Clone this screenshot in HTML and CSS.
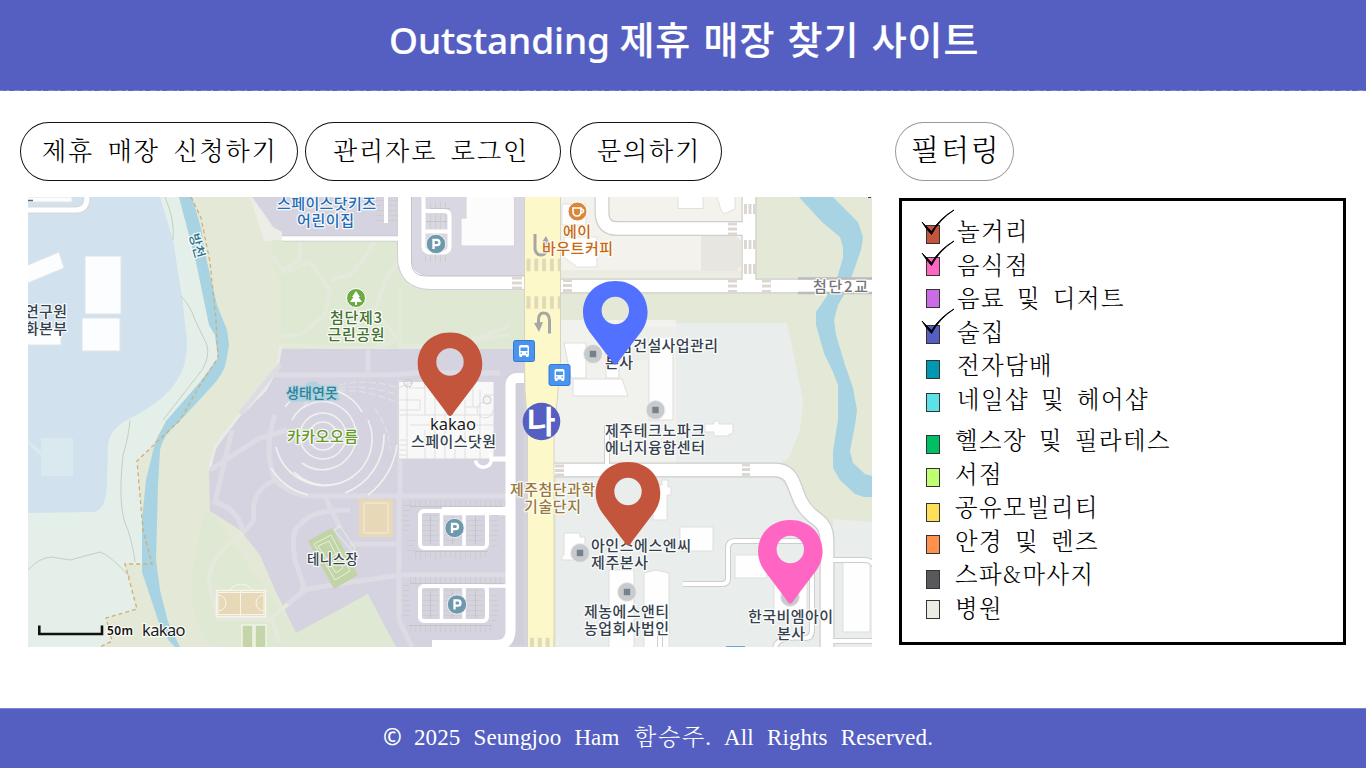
FILE: index.html
```html
<!DOCTYPE html>
<html lang="ko">
<head>
<meta charset="utf-8">
<title>Outstanding 제휴 매장 찾기 사이트</title>
<link rel="stylesheet" href="styles.css">
</head>
<body>
<header class="header"><h1 class="title"><span class="title-en">Outstanding</span> <span class="title-ko">제휴 매장 찾기 사이트</span></h1></header>
<main class="main">
  <section class="left">
    <nav class="nav">
      <button class="pill pill-apply">제휴 매장 신청하기</button>
      <button class="pill pill-login">관리자로 로그인</button>
      <button class="pill pill-ask">문의하기</button>
    </nav>
    <svg class="map" viewBox="28 197 844 450" width="844" height="450">
      <defs>
        <pattern id="hv" width="5" height="8" patternUnits="userSpaceOnUse"><path d="M.5 0V8" stroke="#cfccc9"/></pattern>
        <pattern id="hh" width="8" height="5" patternUnits="userSpaceOnUse"><path d="M0 .5H8" stroke="#cfccc9"/></pattern>
        <path id="pin" fill-rule="evenodd" d="M0 0Q-2 0-4-4L-26-33Q-32.300-42-32.300-52C-32.300-70-19-83.500 0-83.500S32.300-70 32.300-52Q32.300-42 26-33L4-4Q2 0 0 0ZM0-67.700A13.700 13.700 0 1 0 0-40.300A13.700 13.700 0 1 0 0-67.700Z"/>
        <g id="poi"><circle r="9.500" fill="#c8cacd" stroke="#eee"/><rect x="-3.200" y="-3.200" width="6.400" height="6.400" fill="#74838a"/></g>
        <g id="park"><circle r="9.700" fill="#6e98ab" stroke="#edf0f3"/><path d="M-2.500 5V-4.200H.8A2.600 2.600 0 0 1 .8 1.200H-2.500" fill="none" stroke="#fff" stroke-width="2.300"/></g>
        <g id="bus"><rect x=".5" y=".5" width="21" height="21" rx="2" fill="#4a94f0" stroke="#3179d2"/><path fill="#fff" fill-rule="evenodd" d="M6 7Q6 5 8 5H14Q16 5 16 7V15.500H15.500V17H13V15.500H9V17H6.500V15.500H6ZM7.500 7.500V11H14.500V7.500ZM7.500 12.500V13.800H9V12.500ZM13 12.500V13.800H14.500V12.500Z"/></g>
      </defs>
      <rect x="28" y="197" width="844" height="450" fill="#e4e8d7"/>
      <!-- west bank -->
      <path fill="#e5efea" d="M28 197H179L196 262 209 325 215 335 218 358 200 385 180 420 137 461 143 530 152 564H125L137 609 106 618 112 641 100 647H28Z"/>
      <path fill="#d1e2ee" d="M28 197H160L173 240 182 297 187 340Q188 365 176 382 163 402 127 420 109 430 108 445L107 485Q106 512 92 512L28 513Z"/>
      <path fill="#a7d3e2" d="M179 197L196 262 209 325 215 335 218 358 200 382 167 420 155 443 146 480 142 520V572L158 620Q163 636 175 647H180L168 622 160 590 156 560 158 485 160 450Q163 435 178 423L213 385Q224 373 226 362L229 345 227 330 217 305 207 262 201 228 192 197Z"/>
      <path fill="none" stroke="#c3d0bd" d="M165 197Q175 220 173 240M181 296Q190 305 195 320L207 345Q210 357 202 370L163 420M130 420Q129 435 123 455 117 510 128 530 134 550 135 562M28 570Q40 557 52 557L70 560 100 552Q110 555 130 577M167 420L155 443"/>
      <path fill="none" stroke="#d4ae72" stroke-width="1.300" stroke-dasharray="4 3" d="M191 197L201 218 210 262 216 320 218 358 200 385 180 420 137 461 143 530 152 564H125L137 609 106 618 112 641 100 647"/>
      <g fill="#fbfdfe" stroke="#e0e3e6"><path d="M85 256H121V314H85ZM82 318H120V351H82ZM28 265L59 252 64 268 28 283M28 330H61V345H28M28 197H72V202H28"/></g>
      <path fill="#dae9f0" d="M41 438H73V476H41ZM28 440L42 452 41 456 28 444Z"/>
      <path d="M28 210H76Q87 210 87 197" fill="none" stroke="#d8dadd" stroke-width="8"/><path d="M28 210H76Q87 210 87 197" fill="none" stroke="#fff" stroke-width="5"/>
      <path d="M28 200.500H33" stroke="#5a6870" stroke-width="1.500"/>
      <!-- park -->
      <path fill="#ecede6" d="M250 197H260L282 232V241H264Z"/>
      <path fill="#d5d3df" d="M252 197L265 215 273 227 282 232V240H398V197Z"/>
      <path fill="#dee8d2" d="M272 240H398V262Q400 290 424 290H524V350H281V280L272 262Z"/>
      <path fill="none" stroke="#e4eadb" stroke-width="4" d="M300 240V260L282 270M271 255L285 272 310 262 330 290 325 315 300 335 281 336M375 240Q365 260 350 275L330 280M398 262L385 280 375 310 398 340 368 350M400 290V350M281 345L400 350 510 335M398 345Q460 350 510 325"/>
      <path fill="#dee8d2" d="M210 511Q200 520 198 545 184 590 200 630L210 647H396L368 594 296 633Z"/>
      <path fill="#d5d3df" d="M281 349L278 365 270 383 250 408 235 420 215 450 209 470 210 511 240 530 260 555 275 590 296 633 368 594 396 647H527V349Z"/>
      <path fill="none" stroke="#e9ebe7" stroke-width="3" d="M281 345L277 368 265 390 240 414 215 447 209 470"/>
      <path fill="none" stroke="#dddce4" stroke-width="5" d="M210 470L260 438 287 430M232 430L215 502Q240 510 243 533M275 480Q250 490 254 520L243 533M368 350V375M400 380V497M240 414L280 365M275 415Q263 450 275 480 290 495 310 496H507M325 496L340 528M300 525Q310 510 350 510M300 525Q290 530 295 560L305 590 288 604M300 590L400 575H506M399 497V620L412 647M350 544H400M272 375H395L413 373H500"/>
      <path fill="none" stroke="#e4e9dc" stroke-width="4.500" d="M243 533Q203 560 210 590L218 619H270L288 604M272 620L280 642"/>
      <path fill="none" stroke="#dfdee2" stroke-width="1.500" stroke-dasharray="7 3" d="M298 412Q335 370 396 387M303 405Q335 376 396 394M310 398Q345 381 396 402M375 409Q390 430 390 450"/>
      <g fill="none" stroke="#f2f1ef" stroke-width="1.600"><circle cx="323" cy="436" r="14"/><circle cx="323" cy="436" r="23"/><path d="M292 420A34 34 0 1 1 302 463M285 407A46 46 0 0 1 362 412M368 420A46 46 0 0 1 294 472M276 447A50 50 0 0 0 340 483M271 468A61 61 0 0 0 308 495M384 434A61 61 0 0 1 345 493M397 445A74 74 0 0 1 368 495"/></g>
      <path fill="#9dd0df" d="M304 387Q308 379 317 382 325 392 336 389L340 400 290 402 286 394Z" opacity=".6"/>
      <path fill="#e7d9b8" d="M359 499H393V537H359Z"/><path fill="none" stroke="#f3eddd" d="M364 503H388V533H364Z"/>
      <path fill="#c0d4a5" d="M308 541L332 528 358 575 334 589Z"/><path fill="none" stroke="#e9f0dd" d="M314 544L331 535 350 571 335 580ZM318 546L329 541 343 568 336 573ZM321 562L340 552M334 530L340 526 355 548 353 552Z"/>
      <path fill="#e7d9b8" stroke="#f8f5ee" stroke-width="1.500" d="M216.500 590.500H265.500V616.500H216.500Z"/><path fill="none" stroke="#f8f5ee" d="M218 595A8 8 0 0 1 218 611M264 595A8 8 0 0 0 264 611M240.500 590V616M229 590Q241 578 253 590M218 592.500H264V614.500H218Z"/>
      <path fill="#c3d5a9" stroke="#f0f2e6" stroke-width="1.500" d="M242 625H253V649H242ZM255 625H266V649H255Z"/>
      <!-- north-west roads -->
      <path fill="#d9d8e2" d="M411 197H524V276H425Q411 276 411 262Z"/>
      <path fill="none" stroke="#d0cfd5" stroke-width="15" d="M404.500 197V256Q404.500 282.500 431 282.500H526"/>
      <path fill="none" stroke="#c8c7ce" stroke-width="6" d="M282 238.500H400"/>
      <path fill="none" stroke="#fff" stroke-width="13" d="M404.500 197V256Q404.500 282.500 431 282.500H526"/>
      <path fill="none" stroke="#fff" stroke-width="4.500" d="M282 238.500H404"/>
      <path fill="#fff" d="M384 197H388V223H384Z"/><path fill="url(#hh)" d="M376 198H384V222H376ZM388 198H397V222H388Z"/>
      <path fill="#fcfcfd" stroke="#d4d3d9" d="M466 197V218H461V246H514.500V197"/>
      <path fill="none" stroke="#fff" stroke-width="4" d="M423.500 197V246Q423.500 252.500 431 252.500H443Q449.500 252.500 449.500 246V216Q449.500 211 444 211H424M424 231.500H449"/>
      <path fill="url(#hv)" d="M430 202H450V209H430ZM425 255H450V262H425ZM426 214H447V221H426ZM426 222H447V229H426Z"/>
      <path fill="none" stroke="#c6c4cb" d="M426 221.500H447M430 208.500H450M411.500 197V262Q411.500 276 425 276H524"/>
      <!-- Kakao campus and car parks -->
      <path fill="#c9c8d0" d="M506 380Q506 373 514 373H524V645H506Z" opacity=".35"/>
      <path fill="#f8f8f8" stroke="#d7d7d9" d="M398.500 381.500H494V459H398.500Z"/>
      <path fill="none" stroke="#dfdfe1" d="M407 382V459M398 388L414 382M409 388H425V381M425 381V415M435 381V459M445 410V459M398 415H494M410 425H494M465 400V459M480 390V459M465 407H480M473 381V407M484 395H494M425 430V459M398 440H407M398 445H407M398 450H407M398 455H407M455 440V459M484 402A8 8 0 1 0 493 410M398 400H420V410H398"/><circle cx="487" cy="400" r="4" fill="#f4f4f4" stroke="#ccc"/><circle cx="408" cy="383" r="4" fill="none" stroke="#ccc"/>
      <g fill="none" stroke="#fff" stroke-linejoin="round"><path stroke-width="10" d="M524 378H517Q510.500 378 510.500 386V630Q510.500 645 496 645H432"/><path stroke-width="3.500" d="M475.500 460.500A8 8 0 1 0 489 453.500"/><path stroke-width="5" d="M492 459H510"/><path stroke-width="8.500" d="M442 511H510"/><rect x="420" y="511" width="67" height="37" rx="4" stroke-width="4"/><rect x="420" y="586" width="67" height="35" rx="4" stroke-width="4"/><path stroke-width="3.500" d="M441.500 511V548M464 511V548M441.500 586V621M464 586V621M480 586H510"/></g>
      <path fill="url(#hv)" d="M410 500H503V507H410ZM415 551H488V558H415ZM410 577H504V584H410ZM409 625H492V632H409Z"/>
      <path fill="url(#hh)" d="M403 502H410V531H403ZM407 537H414V555H407ZM491 515H498V548H491ZM403 581H410V620H403ZM491 591H498V621H491ZM422 514H438V545H422ZM444 516H461V545H444ZM467 516H484V545H467ZM422 589H438V618H422ZM444 589H461V618H444ZM467 589H484V618H467Z"/>
      <path fill="none" stroke="#c4c3cb" d="M430.500 516V544M452.500 516V544M475.500 516V544M430.500 591V618M452.500 591V618M475.500 591V618M410 506.500H503M415 551.500H488M410 583.500H504M409 625.500H492"/>
      <!-- east blocks -->
      <path fill="#f3f2ed" d="M560 197H595L600 227 615 235H742V279H560ZM609 197H742V221H615Q609 221 609 215Z"/>
      <path fill="#ecece2" d="M560 270H742V279H560Z"/>
      <path fill="#e8e6e0" d="M701 236H736L741 241V266L736 271H701Z"/>
      <path fill="#fff" stroke="#e2e1dc" d="M678 197V208.500H703V197M717 197L721 210 724 214 735 209V197M562 204H586V225H562ZM564 237H597V267H577L564 257Z"/>
      <path fill="#f1f1ed" d="M560 320H676V463H554V405L560 375Z"/>
      <path fill="#e9edec" d="M676 323H787L803 400 800 430 789 458 780 463H676ZM556 477H775Q786 480 795 508L818 530 820 545V647H556ZM833 519L872 522V647H833Z"/>
      <path fill="#fefefe" stroke="#dedfdd" d="M564 343H586V378H571ZM573 379H622L628 396H573ZM649 337H673V420H649ZM606 352H619V378H606ZM653 485H662V480H668V487H671V495H667V520H653ZM680 527H713V551H680ZM735 555H767V578H735ZM774 583H807V615H774ZM609 570H634V648H609ZM644 573L656 570 669 573V648H644ZM843 561H870V632H843ZM564 533H580V537H585V560H562V555H564ZM705 424H714V421H719V424H733V434H729V436H714V432H705Z"/>
      <path fill="#edeeea" d="M598 327H676V337H648V360H635Z"/>
      <g fill="none" stroke="#cdcdcc" stroke-linejoin="round"><path stroke-width="15" d="M602 190V212Q602 228.500 617 228.500H749M749 190V286M554 286H880M554 470H775Q788 470 793 482L800 500Q806 512 818 520 827 527 827 540V650"/><path stroke-width="6" d="M683 584H722Q728 584 728 578V548Q728 541 735 541H825M833 560H864Q872 560 874 566M833 641H874M812 550V630Q812 638 805 638 775 635 775 650M607 425V465M660 620V650"/></g>
      <g fill="none" stroke="#fff" stroke-linejoin="round"><path stroke-width="12.600" d="M602 190V212Q602 228.500 617 228.500H749M749 190V286M554 286H880M554 470H775Q788 470 793 482L800 500Q806 512 818 520 827 527 827 540V650"/><path stroke-width="4" d="M683 584H722Q728 584 728 578V548Q728 541 735 541H825M829 560H864Q872 560 874 566M829 641H874M812 550V630Q812 638 805 638 775 635 775 650M607 425V468M660 620V650"/></g>
      <path fill="#a7d3e2" d="M799 197L822 222 840 237 843 247V258L836 281H850L861 250 863 237 858 222 833 197ZM829 293L816 312V325L824 353 833 372 838 385V420L833 451V468L840 480 855 494 864 497H872V476L865 474 853 463 850 451 855 425 857 410 853 388 845 365 836 335 834 320 838 305 845 293Z"/>
      <path fill="#fff" d="M798 279.500H872V292.500H798Z"/>
      <path fill="none" stroke="#bbbbbe" stroke-width="2.500" d="M798 278.500H872M798 293H872"/>
      <path fill="none" stroke="#ddd7d3" stroke-width="3" d="M728 224H737M728 229H737M728 234H737M745.500 204V214M750 204V214M754.500 204V214M745.500 240V249M750 240V249M754.500 240V249M745.500 264V274M750 264V274M754.500 264V274M728 281H737M728 286H737M728 291.500H737M762 281H771M762 286H771M762 291.500H771M742 465H750M742 469.500H750M742 474.500H750M512 278H522M512 283H522M512 288H522M563 280.500H572M563 285.500H572M563 290.500H572M555 466H564M555 470.500H564M555 475H564"/>
      <!-- main avenue -->
      <path fill="#fdf8c9" stroke="#d8d4c4" d="M524.500 190H560.500V360L557 403 554 425V650H527.500V425L525 390 524.500 360Z"/>
      <path fill="none" stroke="#e0dabb" stroke-width="12.500" stroke-dasharray="4 3.800" d="M526.500 265H560M526.500 302.500H560M530 644H554"/>
      <path fill="none" stroke="#a6a6a6" stroke-width="3" d="M535 234V249Q536 255 541 255 546 255 546 249V242M549.500 333.500V320Q549 313 543.500 313 538.500 313 538.500 320V324"/><path fill="#a6a6a6" d="M542 242L546 236 549 242ZM534 323L543 322 539 332Z"/>
      <!-- symbols -->
      <use href="#park" x="436" y="244"/><use href="#park" x="454.500" y="528"/><use href="#park" x="457" y="604.500"/>
      <use href="#bus" x="513" y="340"/><use href="#bus" x="548.500" y="364"/>
      <circle cx="577.500" cy="211.500" r="9.500" fill="#d9883a" stroke="#fff"/><path d="M573 208H581V211Q581 216 577 216 573 216 573 211ZM581 209.500Q584 209 583.500 211.500 583 213 580.500 213" fill="none" stroke="#fff" stroke-width="1.600"/>
      <circle cx="356" cy="298" r="9.500" fill="#6bab42" stroke="#fff"/><path fill="#fff" d="M356 291L360 297H358.500L362 302H357V305H355V302H350L353.500 297H352Z"/>
      <use href="#poi" x="593" y="354"/><use href="#poi" x="655.500" y="410"/><use href="#poi" x="580" y="553"/><use href="#poi" x="627" y="592"/><use href="#poi" x="790" y="597"/>
      <path fill="#68a3ea" d="M726 646H745V647H726Z"/><path d="M868 197.500H871" stroke="#345" />
      <!-- labels -->
      <g class="label">
        <g fill="#1f6db8"><text x="277" y="209" textLength="99">스페이스닷키즈</text><text x="297" y="225.500" textLength="57">어린이집</text></g>
        <g fill="#c8690f"><text x="563" y="237" textLength="28">에이</text><text x="542" y="254" textLength="71">바우트커피</text></g>
        <text x="813" y="292" textLength="55" fill="#777">첨단2교</text>
        <g fill="#42702f"><text x="330" y="323" textLength="52">첨단제3</text><text x="327.500" y="340" textLength="57">근린공원</text></g>
        <text class="pond" x="286" y="398" textLength="52" fill="#317f96">생태연못</text>
        <text x="287" y="442" textLength="71" fill="#649b22">카카오오름</text>
        <g fill="#9a783b"><text x="510" y="495" textLength="85">제주첨단과학</text><text x="524" y="512" textLength="57">기술단지</text></g>
        <text class="small" x="0" y="0" fill="#287188" transform="translate(189 235) rotate(74)" textLength="25">방천</text>
        <g fill="#35414d"><text x="25" y="316.500" textLength="42">연구원</text><text x="25" y="333.500" textLength="42">화본부</text><text x="411" y="446.500" textLength="85">스페이스닷원</text><text x="619" y="351" textLength="99">담건설사업관리</text><text x="605" y="368" textLength="28">본사</text><text x="605" y="435.500" textLength="100">제주테크노파크</text><text x="605" y="452.500" textLength="100">에너지융합센터</text><text x="591" y="550.500" textLength="100">아인스에스엔씨</text><text x="591" y="568" textLength="57">제주본사</text><text x="584" y="616.500" textLength="85">제농에스앤티</text><text x="584" y="634" textLength="85">농업회사법인</text><text x="748" y="621.500" textLength="85">한국비엠아이</text><text x="777" y="638.500" textLength="28">본사</text><text class="small" x="307" y="563.500" textLength="51">테니스장</text></g>
        <text class="latin" x="430" y="429.500" textLength="46">kakao</text>
        <text class="latin" x="142" y="635.500" textLength="43.500">kakao</text><text class="scale" x="107" y="635" textLength="26">50m</text>
      </g>
      <path fill="none" stroke="#111" stroke-width="2.600" d="M39.300 625.500V634H102V625.500"/>
      <!-- pins -->
      <use href="#pin" x="450" y="416" fill="#c4553d"/><use href="#pin" x="615.300" y="364.500" fill="#5271ff"/><use href="#pin" x="628" y="545.500" fill="#c4553d"/><use href="#pin" x="790.300" y="603.500" fill="#ff66c4"/>
      <circle cx="541.500" cy="421.500" r="18.800" fill="#545fc1"/><text class="here" x="527" y="433">나</text>
    </svg>
  </section>
  <aside class="right">
    <button class="pill pill-filter">필터링</button>
    <ul class="filters">
      <li class="item c1"><i class="swatch"><svg class="check" viewBox="0 0 34 26"><path d="M1 13L10.500 22.500Q19 9 33 1 18 11 10.500 25.500Q5 20 1 13Z"/></svg></i>놀거리</li>
      <li class="item c2"><i class="swatch"><svg class="check" viewBox="0 0 34 26"><path d="M1 13L10.500 22.500Q19 9 33 1 18 11 10.500 25.500Q5 20 1 13Z"/></svg></i>음식점</li>
      <li class="item c3"><i class="swatch"></i>음료 및 디저트</li>
      <li class="item c4"><i class="swatch"><svg class="check" viewBox="0 0 34 26"><path d="M1 13L10.500 22.500Q19 9 33 1 18 11 10.500 25.500Q5 20 1 13Z"/></svg></i>술집</li>
      <li class="item c5"><i class="swatch"></i>전자담배</li>
      <li class="item c6"><i class="swatch"></i>네일샵 및 헤어샵</li>
      <li class="item low c7"><i class="swatch"></i>헬스장 및 필라테스</li>
      <li class="item low c8"><i class="swatch"></i>서점</li>
      <li class="item low c9"><i class="swatch"></i>공유모빌리티</li>
      <li class="item low c10"><i class="swatch"></i>안경 및 렌즈</li>
      <li class="item low c11"><i class="swatch"></i>스파&amp;마사지</li>
      <li class="item low c12"><i class="swatch"></i>병원</li>
    </ul>
  </aside>
</main>
<footer class="footer"><span class="copy">©</span><span>2025 Seungjoo Ham <span class="owner">함승주</span>. All Rights Reserved.</span></footer>
</body>
</html>
```
FILE: styles.css
```css
* { box-sizing: border-box; }
body { margin: 0; width: 1366px; height: 768px; overflow: hidden; display: flex; flex-direction: column; background: #fff; color: #000; font-family: "Noto Serif CJK KR", "Noto Sans CJK KR", sans-serif; }
.header { height: 91px; background: repeating-linear-gradient(90deg, #8088d0 0 3px, #666fc7 3px 7px, #959bd8 7px 9px, #5a64c3 9px 14px, #7a82cd 14px 17px) 0 90px / 100% 1px no-repeat, #545fc1; }
.title { margin: 0; padding-left: 389px; white-space: pre; color: #fff; font: 500 37px/76px "Noto Sans", "Noto Sans CJK KR", sans-serif; -webkit-text-stroke: 0.2px #fff; }
.title-en { letter-spacing: -0.1px; }
.title-ko { font-family: "Noto Sans CJK KR", sans-serif; font-size: 38px; letter-spacing: 0.9px; word-spacing: 0.8px; }
.main { flex: 1; display: flex; }
.left { width: 872px; padding: 31px 0 0 20px; }
.nav { display: flex; height: 59px; margin-bottom: 16px; }
.pill { height: 59px; padding: 0 0 5px; border: 1px solid #111; border-radius: 29px / 30px; background: #fff; color: #000; text-align: left; white-space: nowrap; font: 300 25px/50px "Noto Serif CJK KR", "Noto Sans CJK KR", sans-serif; letter-spacing: 1.9px; word-spacing: 4px; }
.pill-apply { width: 278px; padding-left: 21px; margin-right: 7px; }
.pill-login { width: 256px; padding-left: 27px; margin-right: 9px; }
.pill-ask { width: 152px; padding-left: 26px; }
.map { display: block; margin-left: 8px; }
.label text { font: 500 15px "Noto Sans CJK KR", sans-serif; stroke: #fff; stroke-opacity: .85; stroke-width: 2.5px; paint-order: stroke; stroke-linejoin: round; }
.label .small { font-size: 13.500px; }
.label .pond { font-size: 14px; stroke: #a5d4e1; }
.label .latin { font: 400 16.500px "Noto Sans", sans-serif; fill: #1b1b1b; }
.label .scale { font: 600 12px "Noto Sans", sans-serif; fill: #111; }
.here { font: 700 31px "Noto Sans CJK KR", sans-serif; fill: #fff; }
.right { padding: 31px 0 0 23px; }
.pill-filter { display: block; width: 119px; margin-bottom: 17px; padding-left: 15px; border-color: #999; font-size: 29px; letter-spacing: 1.9px; }
.filters { list-style: none; width: 447px; height: 447px; margin: 0 0 0 4px; padding: 14px 0 0 23px; border: 3px solid #000; }
.item { display: flex; align-items: flex-start; height: 33.500px; padding-left: 0.5px; font-size: 23.300px; font-weight: 300; line-height: 30.500px; letter-spacing: 1.5px; word-spacing: 3.3px; white-space: pre; }
.swatch { position: relative; flex: none; width: 14px; height: 19px; margin-right: 17.5px; border: 1px solid #333; background: var(--c); }
.low .swatch { margin-right: 15.5px; }
.check { position: absolute; left: -6px; top: -17.500px; width: 34px; height: 26px; stroke: #000; stroke-width: 0.9; }
.c1 .swatch { --c: #c4553d; margin-top: 10px; }
.c2 .swatch { --c: #ff66c4; margin-top: 8px; }
.c3 .swatch { --c: #cb6ce6; margin-top: 7px; }
.c4 .swatch { --c: #545fc1; margin-top: 9px; }
.c5 .swatch { --c: #0097b2; margin-top: 11px; }
.c6 .swatch { --c: #5ce1e6; margin-top: 10px; }
.c7 { margin-top: 8px; }
.c7 .swatch { --c: #00bf63; margin-top: 11px; }
.c8 .swatch { --c: #c1ff72; margin-top: 10px; }
.c9 .swatch { --c: #ffde59; margin-top: 12px; }
.c10 .swatch { --c: #ff914d; margin-top: 10px; }
.c11 .swatch { --c: #58595b; margin-top: 12px; }
.c12 .swatch { --c: #ebede4; margin-top: 8px; }
.footer { display: flex; height: 60px; padding-left: 383px; background: #545fc1; border-top: 1px solid #7d85cf; color: #fff; white-space: nowrap; font: 23px/54px "Liberation Serif", "Noto Sans CJK KR", serif; letter-spacing: 0.1px; word-spacing: 7.300px; }
.copy { width: 31px; font: 600 22.500px/55px "Noto Sans", sans-serif; }
.owner { font-family: "Noto Serif CJK KR", "Noto Sans CJK KR", sans-serif; font-weight: 300; letter-spacing: 1.800px; margin-left: 1.5px; margin-right: -1px; }
```
